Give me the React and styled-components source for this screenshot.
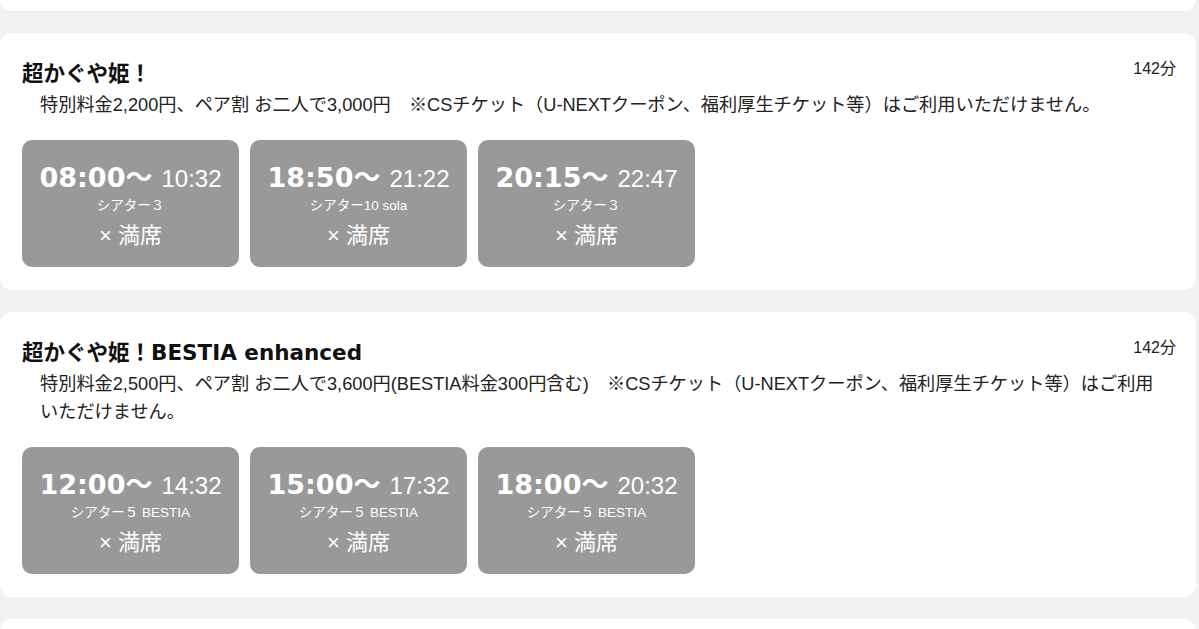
import React from "react";
import styled, { createGlobalStyle } from "styled-components";

const GlobalStyle = createGlobalStyle`
  html, body {
    margin: 0;
    padding: 0;
    background: #f0f1f3;
  }
  body {
    font-family: "Liberation Sans", "Noto Sans CJK JP", sans-serif;
    color: #1a1a1a;
    overflow: hidden;
  }
`;

const movies = [
  {
    title: "超かぐや姫！",
    duration: "142分",
    note: "特別料金2,200円、ペア割 お二人で3,000円　※CSチケット（U-NEXTクーポン、福利厚生チケット等）はご利用いただけません。",
    shows: [
      { start: "08:00", end: "10:32", screen: "シアター３" },
      { start: "18:50", end: "21:22", screen: "シアター10 sola" },
      { start: "20:15", end: "22:47", screen: "シアター３" },
    ],
  },
  {
    title: "超かぐや姫！BESTIA enhanced",
    duration: "142分",
    note: "特別料金2,500円、ペア割 お二人で3,600円(BESTIA料金300円含む)　※CSチケット（U-NEXTクーポン、福利厚生チケット等）はご利用いただけません。",
    shows: [
      { start: "12:00", end: "14:32", screen: "シアター５ BESTIA" },
      { start: "15:00", end: "17:32", screen: "シアター５ BESTIA" },
      { start: "18:00", end: "20:32", screen: "シアター５ BESTIA" },
    ],
  },
];

const App = () => {
  return (
    <>
      <GlobalStyle />
      <Page>
        <CardEdge $side="bottom" />
        {movies.map((m) => (
          <Card key={m.title}>
            <Header>
              <Title>{m.title}</Title>
              <Duration>{m.duration}</Duration>
            </Header>
            <Note>{m.note}</Note>
            <Shows>
              {m.shows.map((s) => (
                <ShowButton key={s.start}>
                  <TimeLine>
                    <Start>
                      {s.start}
                      <Wave>〜</Wave>
                    </Start>
                    <End>{s.end}</End>
                  </TimeLine>
                  <Screen>{s.screen}</Screen>
                  <Status>× 満席</Status>
                </ShowButton>
              ))}
            </Shows>
          </Card>
        ))}
        <CardEdge $side="top" />
      </Page>
    </>
  );
};

const Page = styled.main`
  display: flex;
  flex-direction: column;
  gap: 22px;
  padding-right: 3px;
`;

const CardEdge = styled.div`
  background: #fff;
  height: ${(p) => (p.$side === "bottom" ? "11px" : "40px")};
  border-radius: ${(p) => (p.$side === "bottom" ? "0 0 12px 12px" : "12px 12px 0 0")};
`;

const Card = styled.section`
  background: #fff;
  border-radius: 12px;
  padding: 26px 20px 23px 22px;
`;

const Header = styled.div`
  display: flex;
  justify-content: space-between;
  align-items: flex-start;
`;

const Title = styled.h2`
  margin: 0;
  font-family: "DejaVu Sans", "Noto Sans CJK JP", sans-serif;
  font-size: 21.5px;
  line-height: 29px;
  font-weight: 700;
  color: #111;
`;

const Duration = styled.span`
  font-size: 16px;
  line-height: 20px;
  color: #222;
`;

const Note = styled.p`
  margin: 3px 0 0;
  padding: 0 8px 0 18px;
  font-size: 18.2px;
  line-height: 28px;
  color: #222;
`;

const Shows = styled.div`
  display: flex;
  gap: 11px;
  margin-top: 21px;
`;

const ShowButton = styled.div`
  width: 217px;
  height: 127px;
  box-sizing: border-box;
  border-radius: 10px;
  background: #999999;
  color: #fff;
  display: flex;
  flex-direction: column;
  align-items: center;
  padding-top: 20px;
`;

const TimeLine = styled.div`
  display: flex;
  align-items: baseline;
  gap: 9px;
  line-height: 32px;
  height: 32px;
`;

const Start = styled.span`
  font-family: "DejaVu Sans", "Noto Sans CJK JP", sans-serif;
  font-size: 27px;
  font-weight: 700;
`;

const Wave = styled.span`
  font-family: "Noto Sans CJK JP", sans-serif;
  font-weight: 700;
`;

const End = styled.span`
  font-size: 24px;
`;

const Screen = styled.div`
  margin-top: 4px;
  font-size: 13.5px;
  line-height: 20px;
`;

const Status = styled.div`
  margin-top: 6px;
  font-size: 22px;
  line-height: 28px;
`;

export default App;
